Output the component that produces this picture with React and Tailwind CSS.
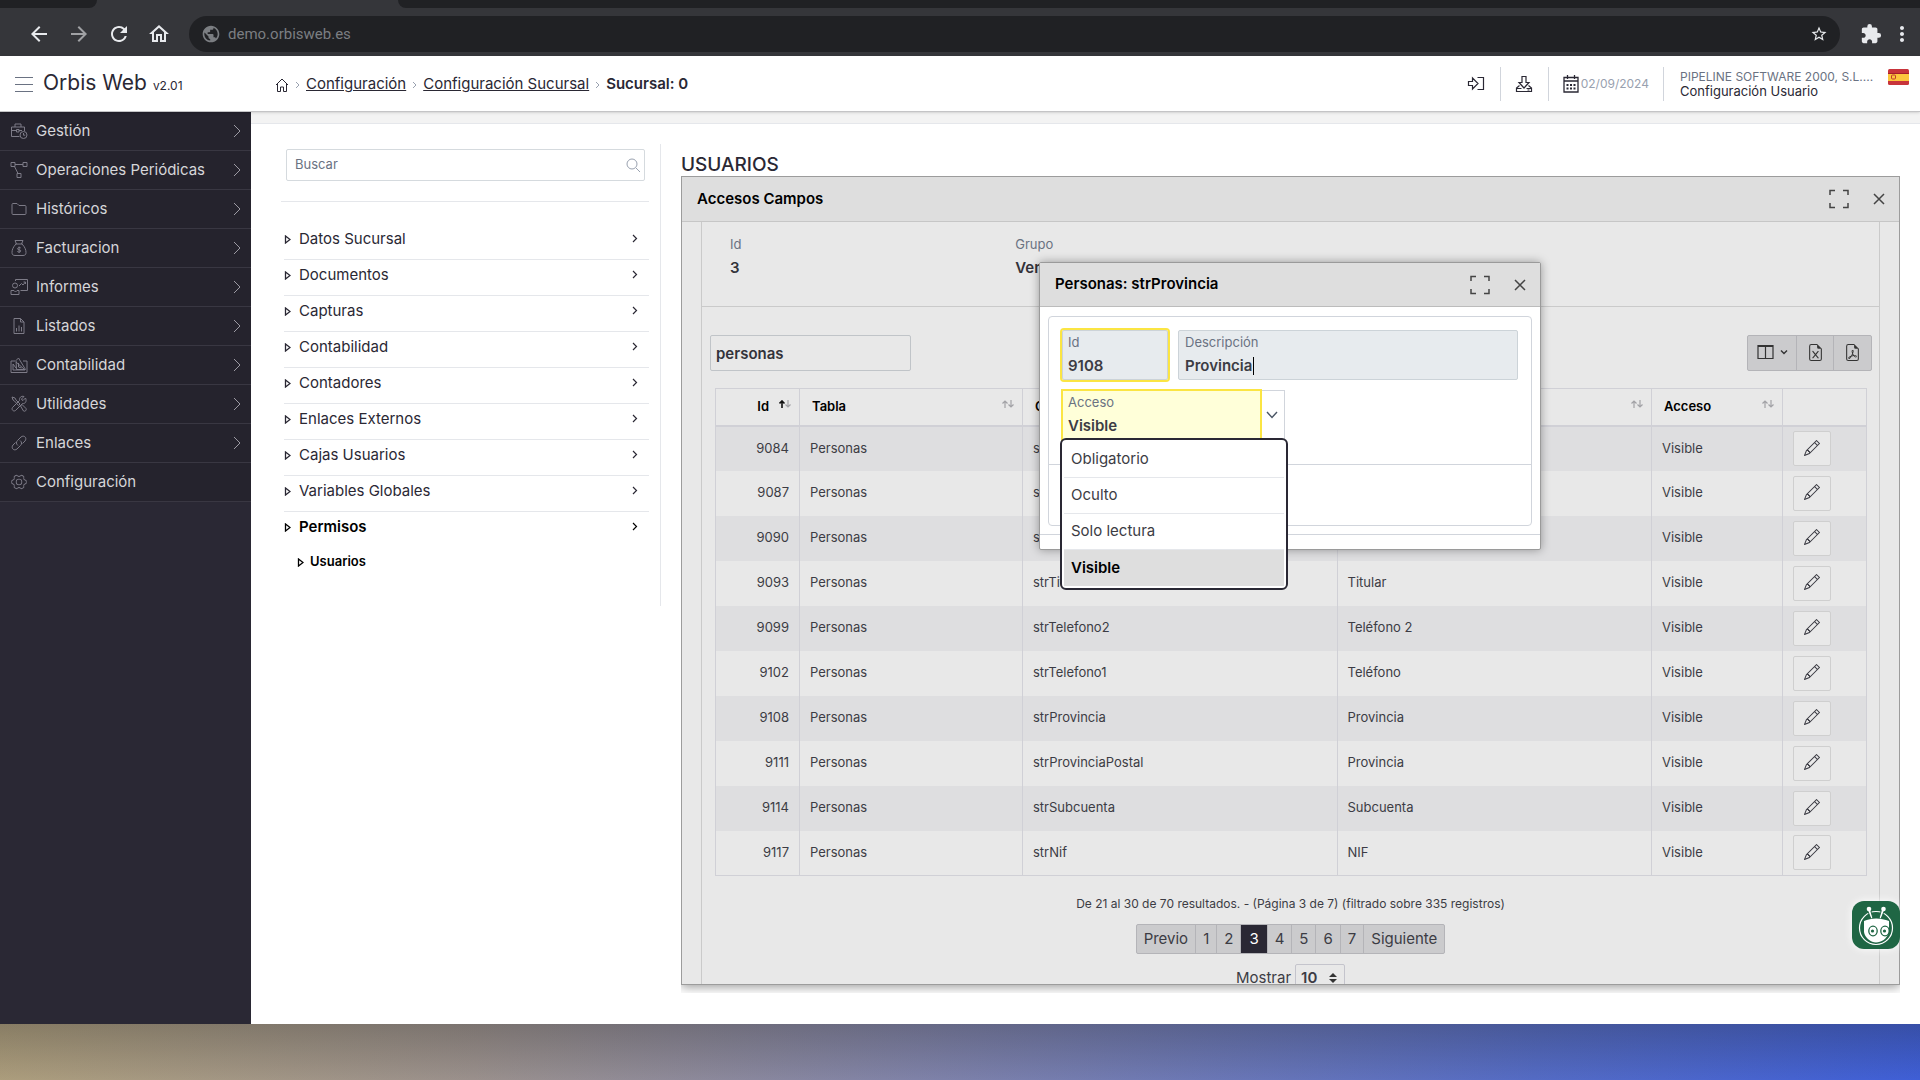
import { BsFileEarmarkExcel, BsFileEarmarkPdf, BsPencil } from 'react-icons/bs';
import { MdArrowBack, MdArrowForward, MdExtension, MdMoreVert, MdOutlineHome, MdPublic, MdRefresh, MdStarBorder } from 'react-icons/md';
import { PiGearSixLight } from 'react-icons/pi';

const Svg = ({ children, className = 'size-[18px]', box = '0 0 18 18', width = 1 }) => (
  <svg className={className} viewBox={box} fill="none" stroke="currentColor" strokeWidth={width} aria-hidden="true">
    {children}
  </svg>
);

const BriefcaseClock = () => (
  <Svg>
    <path d="M9.500 14.500H1.500V5h13v4M5 5V2h6v3M1.500 8.500h5M9 8.500h3M6.500 7.500H9V10H6.500z" />
    <circle cx="13.500" cy="13" r="3.500" />
    <path d="M13.500 11v2.200h1.700" />
  </Svg>
);

const Nodes = () => (
  <Svg>
    <path d="M1 1.500h4v4H1zM13 1.500h4v4h-4zM7 12.500h4v4H7zM5 3.500h8M4.500 5.500L8 12.500" />
  </Svg>
);

const Folder = () => (
  <Svg>
    <path d="M2 13.500v-9c0-.6.400-1 1-1h4l2 2h6c.6 0 1 .4 1 1v7c0 .6-.4 1-1 1H3c-.6 0-1-.4-1-1z" />
  </Svg>
);

const MoneyBag = () => (
  <Svg>
    <path d="M6.500 5L5 1.500h8L11.500 5M5.500 5h7M6 5C3 8 2 11 2 13.500c0 2 1 3 3 3h8c2 0 3-1 3-3C16 11 15 8 12 5" />
    <path d="M10.800 9c-.5-.6-3.300-.8-3.300.8s3.300.6 3.300 2.100-2.800 1.500-3.500.5M9.100 7.500v6.500" />
  </Svg>
);

const Presentation = () => (
  <Svg>
    <path d="M5.500 3V1.500h12v11h-7M9 8l2.500-2.500L13 7l2.500-3M13.500 4h2v2" />
    <circle cx="5" cy="7.500" r="2.500" />
    <path d="M1 16.500v-4h3l1.500 1.500L7 12.500h2v4z" />
  </Svg>
);

const FileChart = () => (
  <Svg>
    <path d="M4 1.500h6.500L14 5v11.500H4zM10.500 1.500V5H14M6.500 14.500V11M9 14.500V8.500M11.500 14.500V10" />
  </Svg>
);

const Ledger = () => (
  <Svg>
    <path d="M5 5H1v11.500h16V5h-4M6 4.500L8.500 2l7 11.500h-9zM3 8v6h12M6 6l8 7M3 8l3 4M8.500 7v4l3 1" />
  </Svg>
);

const Tools = () => (
  <Svg>
    <path d="M2 2l3 1 1 2 4 4-1.500 1.500L4.500 6 3 5zM10.500 11l1.500-1.500 4 4c1 1.500-1 3.500-2.500 2.500z" />
    <path d="M15.500 3L13 5.500 12 5l-.5-1L14 1.500c-3-1-5 1.500-4.500 4L2.500 12.500c-1.500 2 1 4.500 3 3l7-7c3 .5 4.500-2.500 3-5.500z" />
  </Svg>
);

const Link = () => (
  <Svg>
    <path d="M8 11.500c-2-1.500-2-3.500-.5-5l3.500-3.500c3-2.500 6.500 1 4 4L12.500 9.500M10 6.500c2 1.500 2 3.500.5 5L7 15c-3 2.500-6.500-1-4-4l2.500-2.500" />
  </Svg>
);

const Gear = () => <PiGearSixLight className="size-[18px]" />;

const menuItems = [
  { label: 'Gestión', icon: BriefcaseClock },
  { label: 'Operaciones Periódicas', icon: Nodes },
  { label: 'Históricos', icon: Folder },
  { label: 'Facturacion', icon: MoneyBag },
  { label: 'Informes', icon: Presentation },
  { label: 'Listados', icon: FileChart },
  { label: 'Contabilidad', icon: Ledger },
  { label: 'Utilidades', icon: Tools },
  { label: 'Enlaces', icon: Link },
  { label: 'Configuración', icon: Gear, leaf: true }
];

const treeItems = [
  'Datos Sucursal',
  'Documentos',
  'Capturas',
  'Contabilidad',
  'Contadores',
  'Enlaces Externos',
  'Cajas Usuarios',
  'Variables Globales',
  'Permisos'
];

const rows = [
  ['9084', 'strTelefono4', 'Teléfono 4'],
  ['9087', 'strTelefono3', 'Teléfono 3'],
  ['9090', 'strTipoVia', 'Tipo Vía'],
  ['9093', 'strTitular', 'Titular'],
  ['9099', 'strTelefono2', 'Teléfono 2'],
  ['9102', 'strTelefono1', 'Teléfono'],
  ['9108', 'strProvincia', 'Provincia'],
  ['9111', 'strProvinciaPostal', 'Provincia'],
  ['9114', 'strSubcuenta', 'Subcuenta'],
  ['9117', 'strNif', 'NIF']
];

const pages = ['Previo', '1', '2', '3', '4', '5', '6', '7', 'Siguiente'];

const options = ['Obligatorio', 'Oculto', 'Solo lectura', 'Visible'];

const BrowserBar = () => (
  <div className="shrink-0 bg-[#35363a] text-[#e8eaed]">
    <div className="flex h-2 justify-between">
      <div className="w-[97px] rounded-br-lg bg-[#202124]" />
      <div className="ml-[301px] flex-1 rounded-bl-lg bg-[#202124]" />
    </div>
    <div className="flex h-12 items-center pt-1 pr-[6px] pl-[27px]">
      <button type="button" aria-label="Atrás" className="w-10"><MdArrowBack className="size-6" /></button>
      <button type="button" aria-label="Adelante" className="w-10 text-[#a0a1a4]"><MdArrowForward className="size-6" /></button>
      <button type="button" aria-label="Recargar" className="w-10"><MdRefresh className="size-6" /></button>
      <button type="button" aria-label="Inicio" className="mr-[2px] w-10"><MdOutlineHome className="size-6" /></button>
      <div className="flex h-9 flex-1 items-center gap-[7px] rounded-full bg-[#202124] px-3 text-[#7b7e82]">
        <MdPublic className="size-5" />
        <input
          className="flex-1 bg-transparent font-[Roboto,sans-serif] text-[15px] outline-none"
          aria-label="Dirección"
          defaultValue="demo.orbisweb.es"
        />
        <button type="button" aria-label="Favorito" className="text-[#e8eaed]"><MdStarBorder className="size-[18px]" /></button>
      </div>
      <button type="button" aria-label="Extensiones" className="ml-5"><MdExtension className="size-[22px]" /></button>
      <button type="button" aria-label="Menú" className="ml-2"><MdMoreVert className="size-6" /></button>
    </div>
  </div>
);

const Separator = () => (
  <Svg className="h-2 w-[5px] text-gray-400" box="0 0 5 8">
    <path d="M1 1l3 3-3 3" />
  </Svg>
);

const Flag = () => (
  <svg className="h-4 w-[21px]" viewBox="0 0 21 16" aria-label="Español">
    <rect width="21" height="16" rx="1.500" fill="#c8343b" />
    <rect y="4" width="21" height="8" fill="#fcc63d" />
    <rect y="4" width="21" height="1" fill="#a51d2b" />
    <rect x="3.500" y="6" width="4" height="4" rx="1" fill="none" stroke="#c0392b" />
  </svg>
);

const Header = () => (
  <header className="relative z-10 flex h-14 shrink-0 items-center border-b border-[#c4c4c6] bg-white text-[#2a2834] shadow-sm">
    <div className="flex w-[251px] items-center gap-[10px] pl-[15px]">
      <button type="button" aria-label="Menú principal">
        <Svg className="h-4 w-[18px] text-gray-500" box="0 0 18 16">
          <path d="M0 1.500h18M0 8.500h18M0 15.500h18" />
        </Svg>
      </button>
      <h1 className="pt-[2px] text-[21px] leading-6">
        Orbis Web <small className="text-[12px]">v2.01</small>
      </h1>
    </div>
    <nav className="flex flex-1 items-center gap-[6px] pt-[2px] pl-6 text-[15px]" aria-label="Ruta">
      <a href="#inicio" aria-label="Inicio">
        <Svg className="size-[14px]" box="0 0 14 14">
          <path d="M1 7l6-6 6 6M2.500 5.500v8h3V9h3v4.500h3v-8" />
        </Svg>
      </a>
      <Separator />
      <a href="#configuracion" className="underline">Configuración</a>
      <Separator />
      <a href="#sucursal" className="underline">Configuración Sucursal</a>
      <Separator />
      <span className="font-semibold">Sucursal: 0</span>
    </nav>
    <div className="flex items-center">
      <button type="button" aria-label="Salir" className="flex h-[34px] w-12 items-center justify-center border-r border-gray-300">
        <Svg width={1.2}>
          <path d="M1.500 6.500v4h4v3.500L11 8.500 5.500 3v3.500zM10.500 2.500h6v12h-6" />
        </Svg>
      </button>
      <button type="button" aria-label="Descargas" className="flex h-[34px] w-12 items-center justify-center border-r border-gray-300">
        <Svg width={1.2}>
          <path d="M7 1.500h4v6h3l-5 5.500-5-5.500h3zM4.500 10.500L1.500 13v3.500h15V13l-3-2.500M1.500 13.500h5M11.500 13.500h5M12.500 15h2" />
        </Svg>
      </button>
      <div className="flex h-[34px] items-center gap-[2px] border-r border-gray-300 px-[14px] text-[12px] text-gray-400">
        <Svg className="h-[18px] w-4 text-[#2a2834]" box="0 0 16 18" width={1.3}>
          <path d="M1 2.500h14v14.500H1zM1 6h14M4.500 0v4M11.500 0v4" />
          <path strokeWidth="2" strokeDasharray="2 1.500" d="M3.500 10h9M3.500 13.500h9" />
        </Svg>
        02/09/2024
      </div>
      <div className="flex w-[256px] items-start pl-4">
        <div className="w-[208px] text-[13px] leading-[15px]">
          <p className="text-[12px] whitespace-nowrap text-gray-500">PIPELINE SOFTWARE 2000, S.L....</p>
          <a href="#usuario">Configuración Usuario</a>
        </div>
        <Flag />
      </div>
    </div>
  </header>
);

const Sidebar = () => (
  <nav className="w-[251px] shrink-0 bg-[#2a2834]" aria-label="Principal">
    <ul>
      {menuItems.map(({ label, icon: Icon, leaf }) => (
        <li key={label} className="border-b border-[#393742] bg-[#25232d]">
          <a href="#menu" className="flex h-[38px] items-center gap-2 pr-[10px] pl-[10px] text-[15px] text-[#d6d6d9]">
            <span className="text-[#7d7b87]"><Icon /></span>
            <span className="flex-1">{label}</span>
            {!leaf && (
              <Svg className="h-[14px] w-2 text-[#9c9aa3]" box="0 0 8 14">
                <path d="M1 1l6 6-6 6" />
              </Svg>
            )}
          </a>
        </li>
      ))}
    </ul>
  </nav>
);

const Triangle = () => (
  <Svg className="h-[9px] w-[7px] shrink-0" box="0 0 7 9" width={1.3}>
    <path d="M1.500 1v7l4.500-3.500z" />
  </Svg>
);

const TreePanel = () => (
  <aside className="mt-5 h-[462px] w-[380px] shrink-0 border-r border-gray-200 pr-[11px] text-[#2a2834]">
    <div className="border-b border-gray-200 pt-[5px] pr-1 pb-5 pl-[5px]">
      <label className="flex h-8 items-center rounded-xs border border-[#d5dade] pr-1 pl-2">
        <input
          className="min-w-0 flex-1 text-[13px] outline-none placeholder:text-gray-500"
          type="search"
          aria-label="Buscar"
          placeholder="Buscar"
        />
        <Svg className="size-[14px] text-gray-400" box="0 0 14 14">
          <circle cx="6" cy="6" r="5" />
          <path d="M10 10l4 4" />
        </Svg>
      </label>
    </div>
    <ul className="pt-[22px] pl-[3px] text-[15px]">
      {treeItems.map((item) => {
        const open = item === 'Permisos';
        return (
          <li key={item} className={open ? '' : 'border-b border-gray-200'}>
            <a href="#nodo" className={`flex h-[35px] items-center gap-2 pr-[11px] pb-1 ${open ? 'font-semibold text-black' : ''}`}>
              <Triangle />
              <span className="flex-1">{item}</span>
              <Svg className="mb-[2px] h-[9px] w-[6px]" box="0 0 6 9" width={1.2}>
                <path d="M1 1l3.500 3.500L1 8" />
              </Svg>
            </a>
          </li>
        );
      })}
      <li>
        <a href="#usuarios" className="flex h-[30px] items-center gap-[6px] pl-[13px] text-[13px] font-semibold text-black">
          <Triangle />
          Usuarios
        </a>
      </li>
    </ul>
  </aside>
);

const WindowButtons = () => (
  <div className="flex items-center gap-6 text-[#444]">
    <button type="button" aria-label="Maximizar">
      <Svg className="size-5" box="0 0 20 20" width={1.5}>
        <path d="M1 6V1.500h5M14 1.500h5V6M19 14v4.500h-5M6 18.500H1V14" />
      </Svg>
    </button>
    <button type="button" aria-label="Cerrar">
      <Svg className="size-3" box="0 0 12 12" width={1.5}>
        <path d="M1 1l10 10M11 1L1 11" />
      </Svg>
    </button>
  </div>
);

const SortIcon = ({ active }) => (
  <svg className="mb-[6px] h-2 w-3 shrink-0" viewBox="0 0 12 8" fill="none" strokeWidth="1.200" aria-hidden="true">
    <path stroke={active ? '#111' : '#a2a2a6'} strokeWidth={active ? 1.6 : 1.2} d="M3 8V1M.5 3.500L3 1l2.500 2.500" />
    <path stroke="#a2a2a6" d="M9 0v7M6.500 4.500L9 7l2.500-2.500" />
  </svg>
);

const HeaderCell = ({ label, active }) => (
  <th className="h-[37px] border-r border-[#d0d0d6] px-2 pl-3 font-semibold text-black">
    <div className="flex items-center justify-between gap-[10px]">
      <span className={active ? 'flex-1 text-right' : ''}>{label}</span>
      <SortIcon active={active} />
    </div>
  </th>
);

const FieldsTable = () => (
  <table className="w-full table-fixed border-collapse border border-[#d0d0d6] text-left text-[13px] text-[#3c3c44]">
    <colgroup>
      <col className="w-[84px]" />
      <col className="w-[223px]" />
      <col />
      <col />
      <col className="w-[131px]" />
      <col className="w-[84px]" />
    </colgroup>
    <thead>
      <tr className="border-b-2 border-[#d0d0d6]">
        <HeaderCell label="Id" active />
        <HeaderCell label="Tabla" />
        <HeaderCell label="Campo" />
        <HeaderCell label="Descripción" />
        <HeaderCell label="Acceso" />
        <th aria-label="Acciones" />
      </tr>
    </thead>
    <tbody>
      {rows.map(([id, field, text]) => (
        <tr key={id} className="h-[45px] odd:bg-[#dedee0]">
          <td className="border-r border-[#d0d0d6] px-[10px] text-right">{id}</td>
          <td className="border-r border-[#d0d0d6] px-[10px]">Personas</td>
          <td className="border-r border-[#d0d0d6] px-[10px]">{field}</td>
          <td className="border-r border-[#d0d0d6] px-[10px]">{text}</td>
          <td className="border-r border-[#d0d0d6] px-[10px]">Visible</td>
          <td className="px-[10px]">
            <button
              type="button"
              aria-label={`Editar ${field}`}
              className="flex h-[35px] w-[38px] items-center justify-center rounded-xs border border-[#cfcfcf] bg-[#e9e9e9] pb-[2px]"
            >
              <BsPencil className="size-4" />
            </button>
          </td>
        </tr>
      ))}
    </tbody>
  </table>
);

const Pagination = () => (
  <div className="flex flex-col items-center text-[15px] text-[#3c3c44]">
    <p className="mt-[18px] text-[12px] leading-5">
      De 21 al 30 de 70 resultados. - (Página 3 de 7) (filtrado sobre 335 registros)
    </p>
    <div className="mt-[10px] flex h-[30px] divide-x divide-[#b4b4b8] overflow-hidden rounded-xs border border-[#b4b4b8] bg-[#cbcbcd]">
      {pages.map((page) => (
        <button key={page} type="button" className={page === '3' ? 'bg-[#2a2834] px-2 text-white' : 'px-[7px]'}>
          {page}
        </button>
      ))}
    </div>
    <label className="mt-[10px] flex items-center gap-1">
      Mostrar
      <span className="relative">
        <select className="h-7 w-[50px] appearance-none rounded-xs border border-[#c4c4cc] px-[5px] font-semibold" defaultValue="10">
          <option>10</option>
          <option>25</option>
        </select>
        <svg className="pointer-events-none absolute top-[9px] right-2 h-[10px] w-2" viewBox="0 0 8 10" fill="#333" aria-hidden="true">
          <path d="M4 0l4 4H0zM4 10l4-4H0z" />
        </svg>
      </span>
    </label>
  </div>
);

const labelClass = 'block pt-[3px] text-[13px] leading-4 text-gray-500';
const fieldClass = 'mt-[6px] block w-full bg-transparent text-[15px] leading-5 font-semibold text-[#3c3c44] outline-none';

const EditDialog = () => (
  <section
    className="absolute top-[85px] left-[357px] w-[502px] rounded-xs border border-[#9a9a9a] bg-white shadow-[0_0_10px_rgba(0,0,0,0.35)]"
    role="dialog"
    aria-label="Personas: strProvincia"
  >
    <div className="flex h-11 items-center justify-between border-b border-[#bcbcbc] bg-[#dedede] pr-[14px] pl-[15px]">
      <h3 className="text-[15px] font-semibold text-black">Personas: strProvincia</h3>
      <WindowButtons />
    </div>
    <div className="m-2 mt-[9px] rounded-sm border border-gray-300">
      <div className="flex h-[147px] flex-col gap-[10px] px-[13px] pt-[13px]">
        <div className="flex gap-[10px]">
          <label className="h-[50px] w-[106px] rounded-xs border border-[#ccd3d8] bg-[#e7ebee] px-[5px] outline-2 outline-[#fbe543]">
            <span className={labelClass}>Id</span>
            <input className={fieldClass} defaultValue="9108" readOnly />
          </label>
          <label className="relative h-[50px] flex-1 rounded-xs border border-[#ccd3d8] bg-[#e7ebee] px-[6px]">
            <span className={labelClass}>Descripción</span>
            <input className={fieldClass} defaultValue="Provincia" readOnly />
            <span className="absolute top-[26px] left-[74px] h-[18px] w-px bg-black" />
          </label>
        </div>
        <div className="relative flex h-[50px] w-[223px] border border-gray-300">
          <label className="h-12 w-[197px] bg-[#ffffd9] px-[5px] outline-2 outline-[#fbe543]">
            <span className={labelClass}>Acceso</span>
            <input className={fieldClass} role="combobox" aria-expanded="true" aria-controls="accesos" defaultValue="Visible" />
          </label>
          <button type="button" aria-label="Desplegar" className="flex flex-1 items-center justify-center text-gray-600">
            <Svg className="h-2 w-3" box="0 0 12 8" width={1.4}>
              <path d="M1 1l5 5.500L11 1" />
            </Svg>
          </button>
          <ul
            id="accesos"
            role="listbox"
            className="absolute top-[47px] -left-[3px] z-10 w-[228px] rounded-md border-2 border-[#2a2834] bg-white p-[2px] text-[15px] text-[#3c3c44]"
          >
            {options.map((option) => (
              <li
                key={option}
                role="option"
                aria-selected={option === 'Visible'}
                className="flex h-9 items-center border-b border-gray-200 px-[7px] last:border-0 last:bg-[#dedede] last:font-semibold last:text-black"
              >
                {option}
              </li>
            ))}
          </ul>
        </div>
      </div>
      <div className="h-[61px] border-t border-gray-300" />
    </div>
    <div className="h-[15px] border-t border-gray-300" />
  </section>
);

const AccessDialog = () => (
  <section className="relative flex min-h-0 flex-1 flex-col border border-[#9c9c9c] bg-[#e8e8e8] shadow-[0_2px_10px_rgba(0,0,0,0.4)]">
    <div className="flex h-[45px] shrink-0 items-center justify-between border-b border-[#c6c6c6] bg-[#dedede] pr-[14px] pl-[15px]">
      <h3 className="text-[15px] font-semibold text-black">Accesos Campos</h3>
      <WindowButtons />
    </div>
    <div className="min-h-0 flex-1 overflow-hidden px-[19px]">
      <div className="h-full border-x border-[#cacaca]">
        <dl className="grid h-[85px] grid-cols-4 border-b border-[#cacaca] pt-3 pr-2 pl-7">
          <div>
            <dt className="text-[13px] leading-5 text-gray-500">Id</dt>
            <dd className="text-[15px] leading-7 font-semibold text-[#33333a]">3</dd>
          </div>
          <div>
            <dt className="text-[13px] leading-5 text-gray-500">Grupo</dt>
            <dd className="text-[15px] leading-7 font-semibold text-[#33333a]">Ventas</dd>
          </div>
        </dl>
        <div className="flex justify-between pt-7 pr-[7px] pl-2">
          <input
            className="h-9 w-[201px] rounded-xs border border-[#c0c4c8] px-[5px] text-[15px] font-semibold text-[#33333a] outline-none"
            aria-label="Filtrar"
            defaultValue="personas"
          />
          <div className="flex h-9 divide-x divide-[#b4b4b8] rounded-xs border border-[#b4b4b8] bg-[#cbcbcd] text-[#333]">
            <button type="button" aria-label="Columnas" className="flex w-[49px] items-center justify-center gap-[6px] pb-[2px]">
              <Svg className="h-4 w-[17px]" box="0 0 17 16" width={1.2}>
                <path d="M1 1.500h15v13H1zM8.500 2v12" />
                <path strokeWidth="2" d="M1 2h15" />
              </Svg>
              <Svg className="h-[5px] w-2" box="0 0 8 5" width={1.4}>
                <path d="M1 .5l3 3 3-3" />
              </Svg>
            </button>
            <button type="button" aria-label="Exportar a Excel" className="flex w-[37px] items-center justify-center pb-[2px]">
              <BsFileEarmarkExcel className="size-[17px]" />
            </button>
            <button type="button" aria-label="Exportar a PDF" className="flex w-[37px] items-center justify-center pb-[2px]">
              <BsFileEarmarkPdf className="size-[17px]" />
            </button>
          </div>
        </div>
        <div className="pt-[17px] pr-3 pl-[13px]">
          <FieldsTable />
        </div>
        <Pagination />
      </div>
    </div>
    <EditDialog />
  </section>
);

const ChatButton = () => (
  <button
    type="button"
    aria-label="Asistente"
    className="absolute right-5 bottom-[75px] size-12 rounded-xl bg-[#1f6644] shadow-[0_0_8px_#fff]"
  >
    <svg className="size-12" viewBox="0 0 48 48" fill="none" aria-hidden="true">
      <circle cx="24" cy="27" r="16.500" stroke="#fff" strokeWidth="1.200" />
      <path d="M15 8l4 10 2-.5L18 7M33 8l-4 10-2-.5L30 7" fill="#fff" stroke="#1f6644" strokeWidth="1" />
      <circle cx="17" cy="8" r="2.300" fill="#fff" />
      <circle cx="31.500" cy="8" r="2.300" fill="#fff" />
      <path d="M12 20c7-3.500 17-3.500 25 0v11c-2 7-8 10.500-13 10.500S13 37 12 31z" fill="#fff" />
      <ellipse cx="21" cy="30" rx="4.200" ry="4.800" stroke="#1f6644" strokeWidth="1.300" />
      <ellipse cx="33" cy="30" rx="4.200" ry="4.800" stroke="#1f6644" strokeWidth="1.300" />
      <circle cx="20.500" cy="30" r="1.600" fill="#1f6644" />
      <circle cx="32.500" cy="30" r="1.600" fill="#1f6644" />
    </svg>
  </button>
);

const App = () => (
  <div className="flex h-screen flex-col overflow-hidden bg-white font-[Inter,'Noto_Sans',sans-serif]">
    <BrowserBar />
    <Header />
    <div className="relative flex min-h-0 flex-1">
      <Sidebar />
      <main className="flex min-w-0 flex-1 flex-col">
        <div className="h-3 shrink-0 border-b border-gray-200 bg-[#f3f3f3]" />
        <div className="flex min-h-0 flex-1 items-start pl-[30px]">
          <TreePanel />
          <div className="flex h-full min-w-0 flex-1 flex-col pt-7 pr-5 pb-[31px] pl-5">
            <h2 className="h-6 pt-px text-[19px] leading-6 font-medium text-[#2a2834]">USUARIOS</h2>
            <div className="flex min-h-0 flex-1 flex-col overflow-hidden pb-2">
              <AccessDialog />
            </div>
          </div>
        </div>
      </main>
      <ChatButton />
    </div>
    <div className="h-14 shrink-0 bg-[linear-gradient(to_bottom,rgba(30,30,30,0.25),transparent),linear-gradient(100deg,#ac9d7c,#9a908c_25%,#7f82a8_48%,#546bc4_80%,#3f5fd6)]" />
  </div>
);

export default App;
